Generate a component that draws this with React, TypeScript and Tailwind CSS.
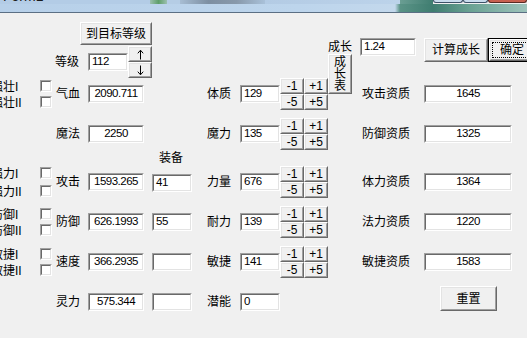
import React from "react";

const SUNKEN_OUT = "border border-t-[#a0a0a0] border-l-[#a0a0a0] border-b-white border-r-white";
const SUNKEN_IN = "border border-t-[#696969] border-l-[#696969] border-b-[#e3e3e3] border-r-[#e3e3e3] bg-white";
const RAISED_OUT = "border border-t-white border-l-white border-b-[#696969] border-r-[#696969]";
const RAISED_IN = "border border-t-[#e3e3e3] border-l-[#e3e3e3] border-b-[#a0a0a0] border-r-[#a0a0a0] bg-[#f0f0f0]";

function TextBox({ w, value = "", center = false, extra = "" }: { w: string; value?: string; center?: boolean; extra?: string }) {
  return (
    <div className={`${w} h-[18px] shrink-0 ${SUNKEN_OUT} ${extra}`}>
      <div
        className={`flex h-full w-full items-center ${SUNKEN_IN} ${center ? "justify-center" : "pl-[2px]"} text-[11.5px] leading-none tracking-[-0.5px]`}
      >
        {value}
      </div>
    </div>
  );
}

function Lbl({ children, cls = "" }: { children: React.ReactNode; cls?: string }) {
  return <div className={`shrink-0 whitespace-nowrap text-[12px] leading-[14px] ${cls}`}>{children}</div>;
}

function Btn({ children, cls = "", inner = "" }: { children: React.ReactNode; cls?: string; inner?: string }) {
  return (
    <div className={`shrink-0 ${RAISED_OUT} ${cls}`}>
      <div className={`flex h-full w-full items-center justify-center ${RAISED_IN} text-[12px] leading-none ${inner}`}>{children}</div>
    </div>
  );
}

function Check() {
  return (
    <div className={`h-[12px] w-[12px] shrink-0 ${SUNKEN_OUT}`}>
      <div className={`h-full w-full ${SUNKEN_IN}`} />
    </div>
  );
}

function CheckPair({ name, gap }: { name: string; gap: string }) {
  return (
    <div className={`-ml-[9px] flex w-[61px] shrink-0 flex-col ${gap}`}>
      {["I", "II"].map((s) => (
        <div key={s} className="flex h-[12px] items-center">
          <div className="w-[49px] whitespace-nowrap pt-[2px] text-[12px] leading-none">
            {name}
            {s}
          </div>
          <Check />
        </div>
      ))}
    </div>
  );
}

function PM() {
  return (
    <div className="grid h-[32px] w-[48px] shrink-0 grid-cols-2">
      <Btn cls="h-[16px] w-[24px]">-1</Btn>
      <Btn cls="h-[16px] w-[24px]">+1</Btn>
      <Btn cls="h-[16px] w-[24px]">-5</Btn>
      <Btn cls="h-[16px] w-[24px]">+5</Btn>
    </div>
  );
}

function Arrow({ down = false }: { down?: boolean }) {
  return (
    <svg width="7" height="11" viewBox="0 0 7 11" className={down ? "rotate-180" : ""}>
      <path d="M3.5 1.5V10.5" stroke="black" strokeWidth="1" fill="none" />
      <path d="M0.8 4.3L3.5 1.2L6.2 4.3" stroke="black" strokeWidth="1" fill="none" />
    </svg>
  );
}

type RowProps = {
  check?: string;
  checkGap?: string;
  label: string;
  value: string;
  equip?: React.ReactNode;
  attr: string;
  attrVal: string;
  apt: string;
  aptVal: string;
};

function StatRow({ check, checkGap = "gap-[4px]", label, value, equip, attr, attrVal, apt, aptVal }: RowProps) {
  return (
    <div className="flex h-[40px] shrink-0 items-center">
      {check ? <CheckPair name={check} gap={checkGap} /> : <div className="w-[52px] shrink-0" />}
      <Lbl cls="ml-[4px] w-[24px]">{label}</Lbl>
      <TextBox w="w-[56px]" extra="ml-[8px]" center value={value} />
      {equip ?? <div className="ml-[8px] w-[40px] shrink-0" />}
      <Lbl cls="ml-[15px] w-[24px]">{attr}</Lbl>
      <TextBox w="w-[40px]" extra="ml-[9px]" value={attrVal} />
      <PM />
      <div className="w-[24px] shrink-0" />
      <Lbl cls="ml-[10px] w-[48px]">{apt}</Lbl>
      <TextBox w="w-[88px]" extra="ml-[14px]" center value={aptVal} />
    </div>
  );
}

function TitleBar() {
  return (
    <div className="flex h-[13px] shrink-0 flex-col overflow-hidden border-b border-b-[#5b6f84]">
      <div className="flex h-[4px] shrink-0">
        <div className="w-[150px] shrink-0 overflow-hidden bg-[#b3cce6]">
          <div className="-mt-[11px] ml-[3px] font-['Liberation_Sans',sans-serif] text-[14px] leading-[14px] text-[#1a1a1a]">Form1</div>
        </div>
        <div className="w-[17px] shrink-0 bg-[linear-gradient(90deg,#9cc0b0,#5f9f6a,#9cc0b0)]" />
        <div className="w-[13px] shrink-0 bg-[#b5cde5]" />
        <div className="w-[85px] shrink-0 bg-[linear-gradient(90deg,#a7bdd3,#7d8fa2,#8899ab,#a9c1d9)]" />
        <div className="w-[135px] shrink-0 bg-[linear-gradient(90deg,#b3cbe4,#bcd3ea)]" />
        <div className="w-[33px] shrink-0 bg-[linear-gradient(90deg,#6a9e93,#3f7d70)]" />
        <div className="h-[3px] w-[30px] shrink-0 rounded-b-[3px] border border-t-0 border-[#3e5268] bg-[#c9dced]" />
        <div className="h-[3px] w-[25px] shrink-0 rounded-b-[3px] border border-t-0 border-[#3e5268] bg-[#c9dced]" />
        <div className="h-[3px] w-[39px] shrink-0 rounded-b-[3px] border border-t-0 border-[#5a2b24] bg-[#c8604f]" />
      </div>
      <div className="h-[8px] shrink-0 bg-[linear-gradient(90deg,#b7d0e9_0px,#bdd5ec_300px,#c3d8ec_395px,#5a9386_400px,#3f7d70_433px,#6aa293_470px,#9ec3bb_527px)]" />
    </div>
  );
}

export default function App() {
  return (
    <div className="flex h-[338px] w-[527px] flex-col overflow-hidden bg-[#f0f0f0] font-['Liberation_Sans','Noto_Sans_CJK_SC',sans-serif] text-black">
      <TitleBar />

      {/* top section */}
      <div className="flex h-[61px] shrink-0 items-start">
        <div className="ml-[55px] flex w-[97px] shrink-0 flex-col">
          <Btn cls="ml-[25px] mt-[9px] h-[23px] w-[72px]">到目标等级</Btn>
          <div className="mt-[1px] flex h-[32px] items-center">
            <Lbl cls="w-[24px]">等级</Lbl>
            <TextBox w="w-[40px]" extra="ml-[9px]" value="112" />
            <div className="flex w-[24px] shrink-0 flex-col">
              <Btn cls="h-[16px] w-[24px]">
                <Arrow />
              </Btn>
              <Btn cls="h-[16px] w-[24px]">
                <Arrow down />
              </Btn>
            </div>
          </div>
        </div>
        <div className="ml-[176px] flex w-[24px] shrink-0 flex-col">
          <Lbl cls="mt-[27px] h-[12px] leading-[12px]">成长</Lbl>
          <Btn cls="mt-[2px] h-[40px] w-[24px]" inner="flex-col">
            <span className="block h-[12px] leading-[12px]">成</span>
            <span className="block h-[12px] leading-[12px]">长</span>
            <span className="block h-[12px] leading-[12px]">表</span>
          </Btn>
        </div>
        <TextBox w="w-[56px]" extra="ml-[8px] mt-[25px]" value="1.24" />
        <Btn cls="ml-[8px] mt-[25px] h-[24px] w-[64px]">计算成长</Btn>
        <div className="mt-[25px] h-[24px] w-[48px] shrink-0 border border-black">
          <div className={`h-full w-full ${RAISED_OUT}`}>
            <div className={`h-full w-full p-[1px] ${RAISED_IN}`}>
              <div className="flex h-full w-full items-center justify-center border border-dotted border-black text-[12px] leading-none">
                确定
              </div>
            </div>
          </div>
        </div>
      </div>

      <StatRow check="强壮" label="气血" value="2090.711" attr="体质" attrVal="129" apt="攻击资质" aptVal="1645" />
      <StatRow label="魔法" value="2250" attr="魔力" attrVal="135" apt="防御资质" aptVal="1325" />
      <div className="h-[8px] shrink-0" />
      <StatRow
        check="强力"
        checkGap="gap-[6px]"
        label="攻击"
        value="1593.265"
        equip={
          <div className="ml-[8px] -mt-[21px] flex w-[40px] shrink-0 flex-col">
            <Lbl cls="mb-[10px] ml-[7px] h-[13px] leading-[13px]">装备</Lbl>
            <TextBox w="w-[40px]" value="41" />
          </div>
        }
        attr="力量"
        attrVal="676"
        apt="体力资质"
        aptVal="1364"
      />
      <StatRow
        check="防御"
        label="防御"
        value="626.1993"
        equip={<TextBox w="w-[40px]" extra="ml-[8px]" value="55" />}
        attr="耐力"
        attrVal="139"
        apt="法力资质"
        aptVal="1220"
      />
      <StatRow
        check="敏捷"
        label="速度"
        value="366.2935"
        equip={<TextBox w="w-[40px]" extra="ml-[8px]" />}
        attr="敏捷"
        attrVal="141"
        apt="敏捷资质"
        aptVal="1583"
      />
      <div className="flex h-[40px] shrink-0 items-center">
        <div className="w-[52px] shrink-0" />
        <Lbl cls="ml-[4px] w-[24px]">灵力</Lbl>
        <TextBox w="w-[56px]" extra="ml-[8px]" center value="575.344" />
        <TextBox w="w-[40px]" extra="ml-[8px]" />
        <Lbl cls="ml-[15px] w-[24px]">潜能</Lbl>
        <TextBox w="w-[40px]" extra="ml-[9px]" value="0" />
        <Btn cls="ml-[160px] mt-[4px] h-[25px] w-[57px] self-start">重置</Btn>
      </div>
    </div>
  );
}
